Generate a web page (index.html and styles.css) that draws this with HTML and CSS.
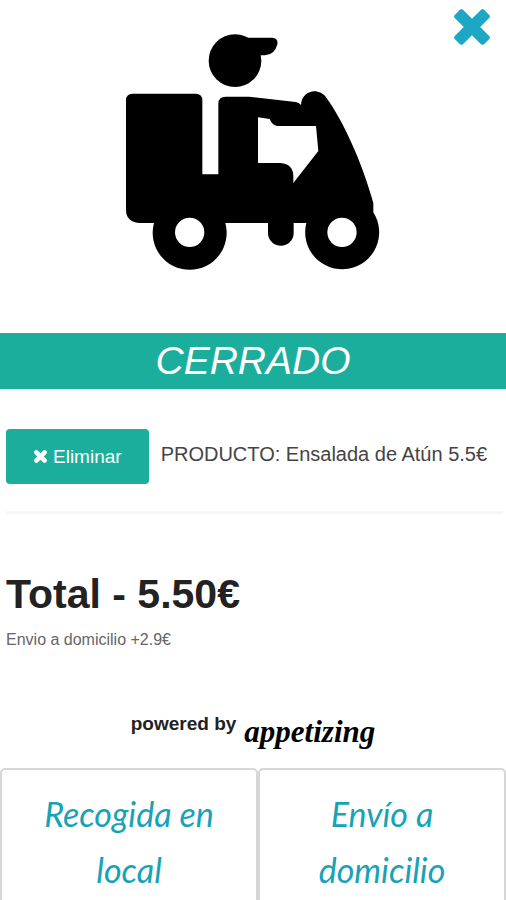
FILE: index.html
```html
<!DOCTYPE html>
<html lang="es">
<head>
<meta charset="utf-8">
<meta name="viewport" content="width=device-width, initial-scale=1">
<title>Pedido</title>
<link rel="stylesheet" href="styles.css">
</head>
<body>
<button class="close" type="button" aria-label="Cerrar">
  <svg class="close-icon" viewBox="0 0 36 36" aria-hidden="true"><path d="M8 8 28 28M28 8 8 28"/></svg>
</button>
<main class="order">
  <div class="hero">
    <svg class="scooter" viewBox="51 41 762 708" aria-hidden="true">
      <circle cx="378" cy="121" r="79"/>
      <path d="M400 52H490Q508 54 505 72Q497 104 468 105H440Z"/>
      <path fill-rule="evenodd" d="M71 220H260Q280 220 280 240V462H328V250Q328 229 350 229H420L560 245Q570 247 576 254C578 210 629 199 652 232C700 298 758 420 793 548V576A111 111 0 1 1 592 608H554V638A38 38 0 0 1 477 638V608H349A111 111 0 1 1 135 608H90Q51 604 51 568V240Q51 220 71 220ZM447 291V428H515Q552 431 553 466V488L628 392L621 317H505Q489 314 482 296ZM242 592A44 44 0 1 0 242 680A44 44 0 1 0 242 592ZM699 592A44 44 0 1 0 699 680A44 44 0 1 0 699 592Z"/>
    </svg>
  </div>
  <h1 class="status">CERRADO</h1>
  <div class="item">
    <button class="remove" type="button">
      <svg class="remove-icon" viewBox="0 0 36 36" aria-hidden="true"><path d="M8 8 28 28M28 8 8 28"/></svg>
      Eliminar
    </button>
    <span class="product">PRODUCTO: Ensalada de Atún 5.5€</span>
  </div>
  <section class="summary">
    <h2 class="total">Total - 5.50€</h2>
    <p class="shipping">Envio a domicilio +2.9€</p>
  </section>
  <p class="powered">powered by <span class="brand">appetizing</span></p>
  <div class="options">
    <button class="option" type="button">Recogida en local</button>
    <button class="option" type="button">Envío a domicilio</button>
  </div>
</main>
</body>
</html>
```
FILE: styles.css
```css
* {
  box-sizing: border-box;
}

body {
  margin: 0;
  background: #fff;
  color: #222;
  font-family: "Liberation Sans", Arial, sans-serif;
}

button {
  cursor: pointer;
}

h1, h2, p {
  margin: 0;
}

.close {
  position: absolute;
  top: 8px;
  right: 15px;
  padding: 0;
  border: 0;
  background: none;
}

.close-icon {
  display: block;
  width: 38px;
  height: 38px;
  stroke: #1ca8c4;
}

.close-icon,
.remove-icon {
  fill: none;
  stroke-width: 11;
  stroke-linecap: square;
  clip-path: inset(3% round 4px);
}

.hero {
  display: flex;
  justify-content: center;
  padding: 34px 0 63px;
}

.scooter {
  width: 254px;
  height: 236px;
}

.status {
  background: #1bae9c;
  color: #fff;
  font-size: 39px;
  font-style: italic;
  font-weight: 400;
  line-height: 56px;
  text-align: center;
}

.item {
  display: flex;
  align-items: center;
  gap: 12px;
  margin: 40px 3px 0 6px;
  padding-bottom: 27px;
  border-bottom: 3px solid #f7f7f7;
}

.remove {
  display: flex;
  align-items: center;
  justify-content: center;
  gap: 5px;
  flex: none;
  padding: 16px 27px;
  border: 0;
  border-radius: 4px;
  background: #1bae9c;
  color: #fff;
  font: 19px/23px "Liberation Sans", Arial, sans-serif;
}

.remove-icon {
  width: 15px;
  height: 15px;
  stroke: #fff;
  clip-path: none;
  stroke-linecap: round;
}

.product {
  padding-bottom: 4px;
  color: #444;
  font-size: 20px;
  white-space: nowrap;
}

.summary {
  padding: 56px 6px 0;
}

.total {
  font-size: 41px;
  line-height: 48px;
}

.shipping {
  margin-top: 12px;
  color: #666;
  font-size: 16px;
  line-height: 20px;
}

.powered {
  display: flex;
  justify-content: center;
  gap: 8px;
  margin-top: 60px;
  font-size: 19px;
  font-weight: 700;
  line-height: 28px;
}

.brand {
  padding-top: 8px;
  color: #000;
  font-family: "Liberation Serif", "Times New Roman", serif;
  font-size: 31px;
  font-style: italic;
}

.options {
  display: grid;
  grid-template-columns: 51fr 49fr;
  margin-top: 22px;
}

.option {
  padding: 16px 32px;
  border: 2px solid #d6d6d6;
  border-radius: 5px;
  background: #fff;
  color: #17a2b8;
  font: italic 34px/56px Lato, sans-serif;
}
```
